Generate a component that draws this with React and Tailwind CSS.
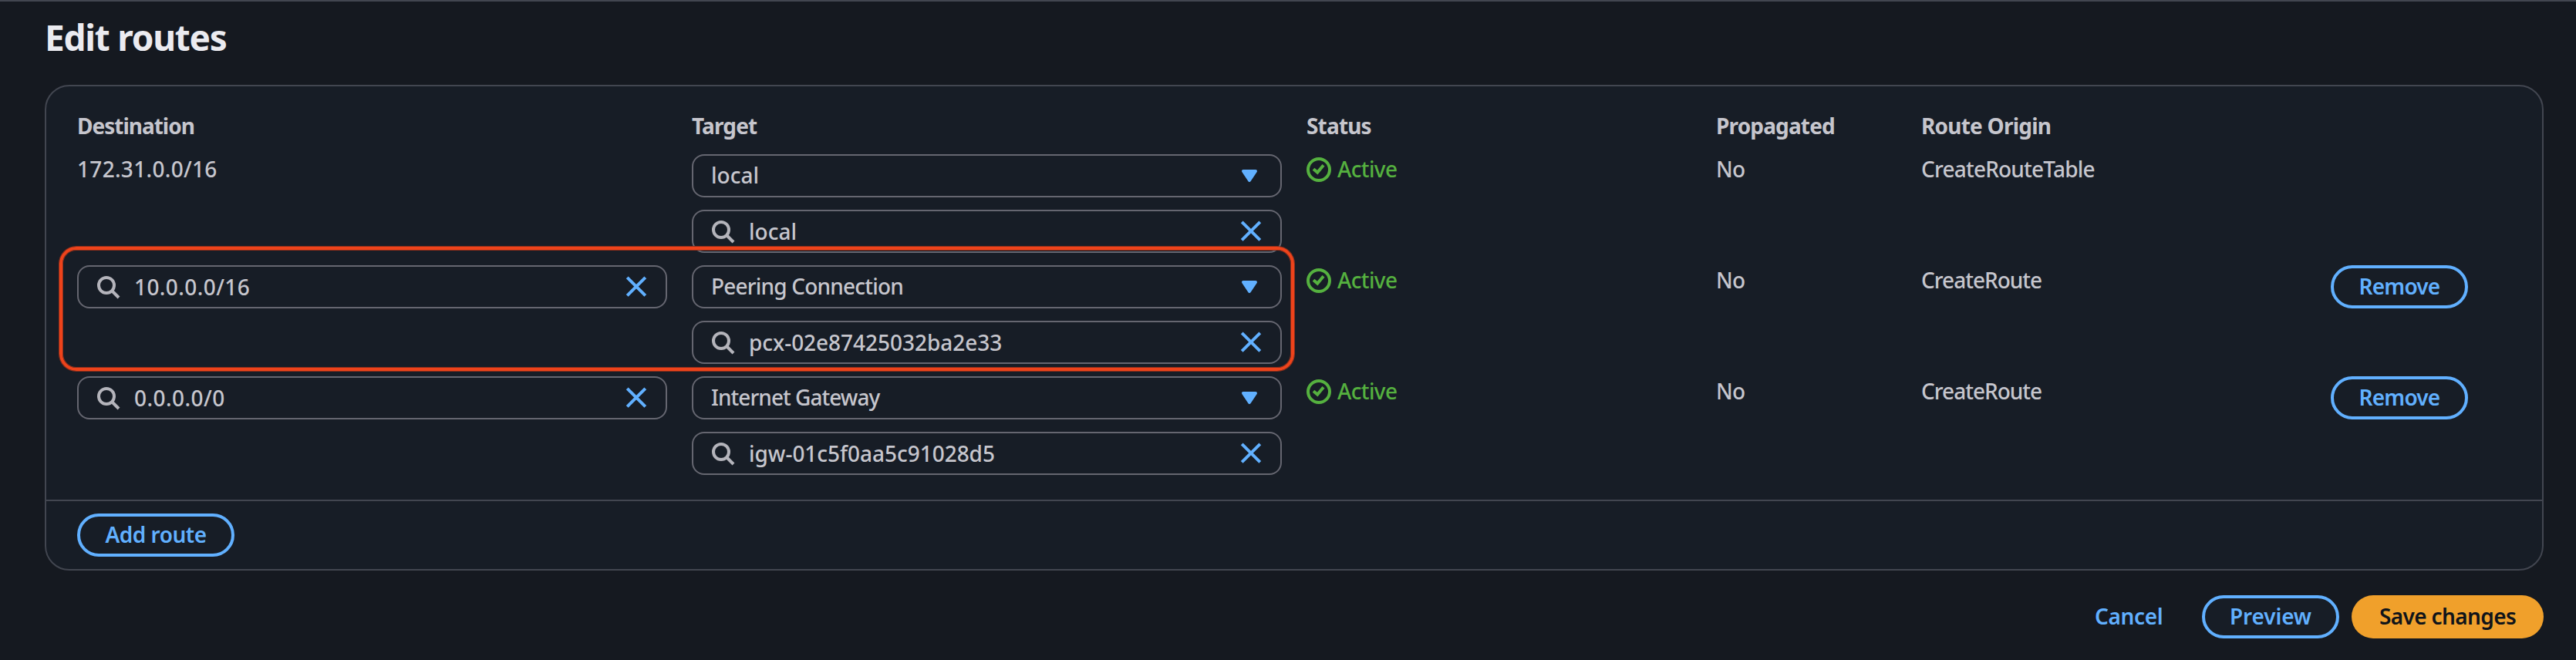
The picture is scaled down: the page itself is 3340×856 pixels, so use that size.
import React from "react";

const Search = () => (
  <svg className="size-8 shrink-0" viewBox="0 0 16 16" fill="none" stroke="#b4b4bb" strokeWidth="2">
    <circle cx="7" cy="7" r="5" />
    <path d="m15 15-4.5-4.5" />
  </svg>
);
const Close = () => (
  <svg className="size-8 shrink-0" viewBox="0 0 16 16" fill="none" stroke="#61b0ff" strokeWidth="2">
    <path d="m2.1 1.9 11.8 11.8M13.9 1.9 2.1 13.7" />
  </svg>
);
const Caret = () => (
  <svg className="size-8 shrink-0" viewBox="0 0 16 16" fill="#61b0ff" stroke="#61b0ff" strokeWidth="2" strokeLinejoin="round">
    <path d="M4 5h8l-4 6-4-6z" />
  </svg>
);
const Check = () => (
  <svg className="mt-[5px] size-8 shrink-0" viewBox="0 0 16 16" fill="none" stroke="#55b13f" strokeWidth="2">
    <circle cx="8" cy="8" r="7" />
    <path d="M4.5 7.6 7.1 9.8 11 5.1" />
  </svg>
);

const field = "flex h-14 items-center rounded-[16px] border-2 border-[#656670] whitespace-nowrap";

function SearchField({ value, tracking }) {
  return (
    <div className={field + " px-[22px]"}>
      <Search />
      <span className={"ml-[18px] flex-1 " + tracking}>{value}</span>
      <Close />
    </div>
  );
}

function SelectField({ value, tracking }) {
  return (
    <div className={field + " pr-6 pl-[23px]"}>
      <span className={"flex-1 pb-0.5 " + tracking}>{value}</span>
      <Caret />
    </div>
  );
}

function Button({ children, className }) {
  return (
    <button
      type="button"
      className={"flex h-14 items-center justify-center rounded-full border-4 border-[#61b0ff] pb-0.5 font-semibold whitespace-nowrap text-[#61b0ff] " + className}
    >
      {children}
    </button>
  );
}

const rows = [
  {
    fixed: "172.31.0.0/16",
    kind: "local", kindTracking: "tracking-[0.04px]",
    target: "local", targetTracking: "tracking-[0.04px]",
    origin: "CreateRouteTable", originTracking: "tracking-[-0.8px]",
  },
  {
    dest: "10.0.0.0/16", destTracking: "tracking-[0.4px]",
    kind: "Peering Connection", kindTracking: "tracking-[-0.81px]",
    target: "pcx-02e87425032ba2e33", targetTracking: "tracking-[-0.04px]",
    origin: "CreateRoute", originTracking: "tracking-[-1px]",
  },
  {
    dest: "0.0.0.0/0", destTracking: "tracking-[0.45px]",
    kind: "Internet Gateway", kindTracking: "tracking-[-0.96px]",
    target: "igw-01c5f0aa5c91028d5", targetTracking: "tracking-[-0.03px]",
    origin: "CreateRoute", originTracking: "tracking-[-1px]",
  },
];

const cols = "grid grid-cols-[765px_765px_499px_234px_499px_178px] gap-x-8";

export default function App() {
  return (
    <div className="flex h-[856px] flex-col border-t-2 border-[#424650] bg-[#151920] pr-[42px] pl-[58px] font-['Noto_Sans',sans-serif] text-[28px] leading-10 font-medium text-[#c6c6cd]">
      <h1 className="mt-[18px] text-[46px] leading-[56px] font-bold tracking-[-1.25px] text-[#ebebf0]">Edit routes</h1>
      <main className="relative mt-[34px] h-[630px] rounded-[32px] border-2 border-[#424650] bg-[#171d26]">
        <div className="h-[538px] border-b-2 border-[#424650] px-10 pt-[31px]">
          <div className={cols + " font-bold"}>
            <span className="tracking-[-1.01px]">Destination</span>
            <span className="tracking-[-0.87px]">Target</span>
            <span className="tracking-[-0.82px]">Status</span>
            <span className="tracking-[-0.85px]">Propagated</span>
            <span className="tracking-[-0.78px]">Route Origin</span>
          </div>
          <div className="mt-[17px] flex flex-col gap-4">
            {rows.map((r) => (
              <div key={r.target} className={cols}>
                {r.dest ? (
                  <div><SearchField value={r.dest} tracking={r.destTracking} /></div>
                ) : (
                  <div className="-mt-px tracking-[0.3px]">{r.fixed}</div>
                )}
                <div className="flex flex-col gap-4">
                  <SelectField value={r.kind} tracking={r.kindTracking} />
                  <SearchField value={r.target} tracking={r.targetTracking} />
                </div>
                <div className="-mt-px flex items-start gap-2 tracking-[-0.63px] text-[#55b13f]"><Check />Active</div>
                <div className="-mt-px tracking-[-0.73px]">No</div>
                <div className={"-mt-px " + r.originTracking}>{r.origin}</div>
                <div>{r.dest && <Button className="w-[178px] tracking-[-0.8px]">Remove</Button>}</div>
              </div>
            ))}
          </div>
        </div>
        <div className="px-10 pt-4"><Button className="w-[204px] tracking-[-0.49px]">Add route</Button></div>
        <div className="absolute top-[208px] left-[17px] h-[161px] w-[1601px] rounded-[22px] border-4 border-[#ee431b] shadow-[0_0_0_1px_#8f2f1c,inset_0_0_0_1px_#8f2f1c]" />
      </main>
      <footer className="mt-8 flex items-center justify-end gap-4">
        <span className="mr-[34px] w-[89px] pb-0.5 font-semibold tracking-[-0.35px] text-[#61b0ff]">Cancel</span>
        <Button className="w-[178px] bg-[#171d26] tracking-[-0.15px]">Preview</Button>
        <button type="button" className="flex h-14 w-[249px] items-center justify-center rounded-full bg-[#f0a02b] pb-0.5 font-semibold tracking-[-0.62px] text-[#0f141a]">Save changes</button>
      </footer>
    </div>
  );
}
